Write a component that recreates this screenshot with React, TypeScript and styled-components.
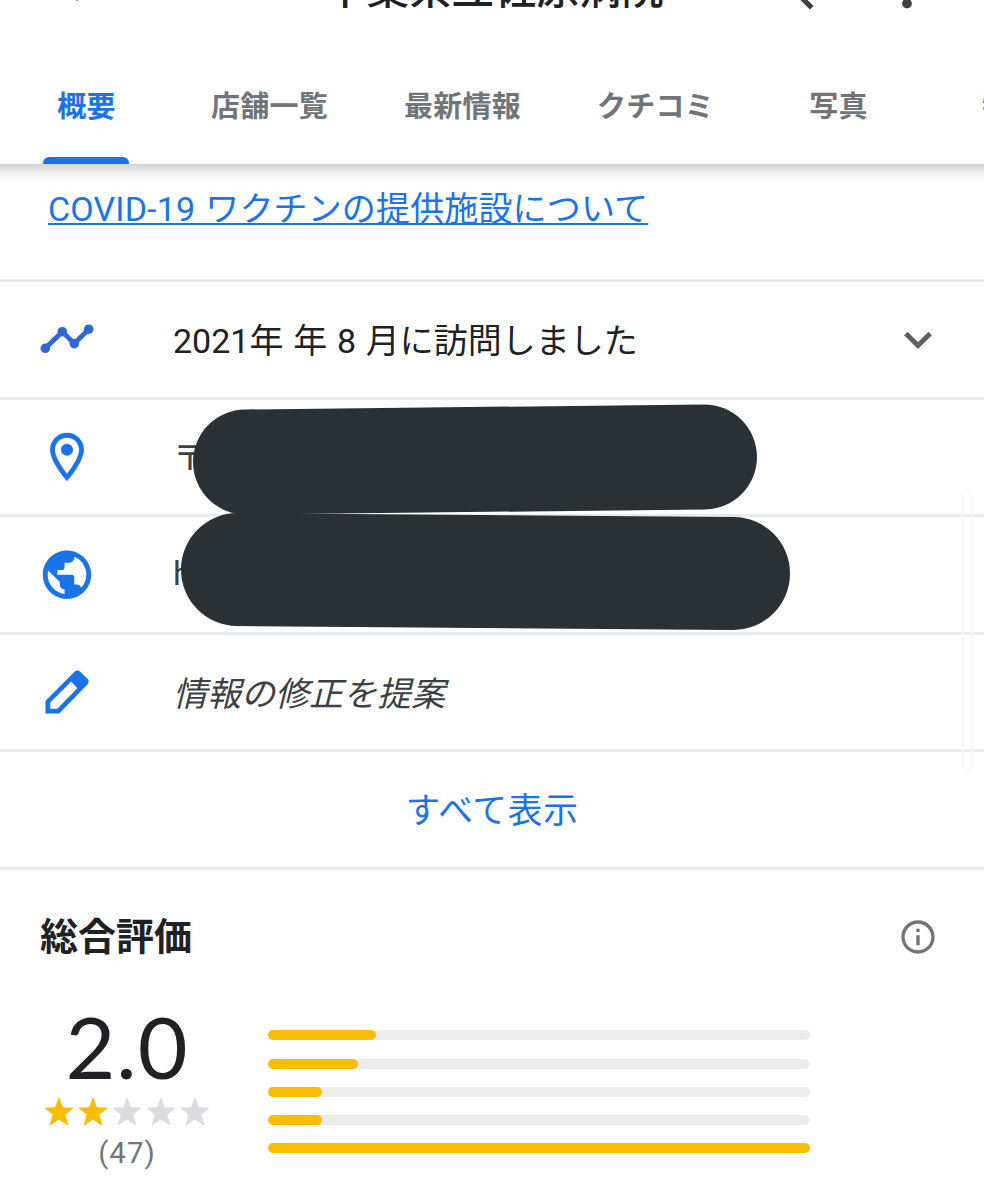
import { FC, ReactNode } from 'react';
import styled, { createGlobalStyle } from 'styled-components';
import { MdArrowBack, MdInfoOutline, MdMoreVert, MdSearch } from 'react-icons/md';

const colors = {
  blue: '#1a73e8',
  timeline: '#3367d6',
  text: '#202124',
  body: '#3c4043',
  grey: '#70757a',
  line: '#e8eaed',
  star: '#fbbc04',
  starEmpty: '#dadce0',
  track: '#ececec',
  marker: '#2b3034',
};

const TABS = ['概要', '店舗一覧', '最新情報', 'クチコミ', '写真', '特徴'];
const REVIEW_BARS = [20, 16.6, 10, 10, 100];
const RATING = 2;

const TimelineIcon: FC = () => (
  <svg width="54" height="30" viewBox="0 0 54 30" fill={colors.timeline}>
    <path
      d="M5.3 24.3L22.3 7.7L34.3 19.6L48.7 5.2"
      fill="none"
      stroke={colors.timeline}
      strokeWidth="4.8"
    />
    <circle cx="5.3" cy="24.3" r="4.8" />
    <circle cx="22.3" cy="7.7" r="4.8" />
    <circle cx="34.3" cy="19.6" r="4.8" />
    <circle cx="48.7" cy="5.2" r="4.8" />
  </svg>
);

const PlaceIcon: FC = () => (
  <svg width="58" height="58" viewBox="0 0 24 24" fill={colors.blue}>
    <path d="M12 2C8.13 2 5 5.13 5 9c0 5.25 7 13 7 13s7-7.75 7-13c0-3.87-3.13-7-7-7zM7 9c0-2.76 2.24-5 5-5s5 2.24 5 5c0 2.88-2.88 7.19-5 9.88C9.92 16.21 7 11.85 7 9z" />
    <circle cx="12" cy="9" r="2.5" />
  </svg>
);

const GlobeIcon: FC = () => (
  <svg width="58" height="58" viewBox="0 -0.3 24 24" fill={colors.blue}>
    <path d="M12 2C6.48 2 2 6.48 2 12s4.48 10 10 10 10-4.48 10-10S17.52 2 12 2zm-1 17.93c-3.95-.49-7-3.85-7-7.93 0-.62.08-1.21.21-1.79L9 15v1c0 1.1.9 2 2 2v1.93zm6.9-2.54c-.26-.81-1-1.39-1.9-1.39h-1v-3c0-.55-.45-1-1-1H8v-2h2c.55 0 1-.45 1-1V7h2c1.1 0 2-.9 2-2v-.41c2.93 1.19 5 4.06 5 7.41 0 2.08-.8 3.97-2.1 5.39z" />
  </svg>
);

const PencilIcon: FC = () => (
  <svg width="44" height="44" viewBox="0 0 44 44" fill={colors.blue} fillRule="evenodd">
    <path d="M.5 43.5V30.7L29.8 1.6Q32.4-.6 35 1.6L42.6 9Q44.8 11.6 42.6 14.2L14.3 43.5ZM5.3 38.8H12.3L32.4 18.2L26.2 11.6L5.3 32.4Z" />
  </svg>
);

const ChevronIcon: FC = () => (
  <svg width="30" height="20" viewBox="0 0 30 20" fill="none" stroke="#616161" strokeWidth="5">
    <path d="M2.8 4.5L15 16.5L27.2 4.5" />
  </svg>
);

const StarIcon: FC<{ color: string }> = ({ color }) => (
  <svg width="34" height="30" viewBox="0 0 34 30" fill={color} stroke={color} strokeLinejoin="round">
    <path d="M17 1L20.6 10.8L30.8 11.2L22.8 17.6L25.8 28L17 22L8.2 28L11.2 17.6L3.2 11.2L13.4 10.8Z" />
  </svg>
);

type InfoRowProps = {
  icon: ReactNode;
  children: ReactNode;
  end?: ReactNode;
};

const InfoRow: FC<InfoRowProps> = ({ icon, children, end }) => (
  <Row>
    <IconSlot>{icon}</IconSlot>
    {children}
    {end && <RowEnd>{end}</RowEnd>}
  </Row>
);

const App: FC = () => (
  <>
    <GlobalStyle />
    <Page>
      <Header>
        <Toolbar>
          <BackButton>
            <MdArrowBack size={36} />
          </BackButton>
          <Title>千葉県立佐原病院</Title>
          <Actions>
            <MdSearch size={58} />
            <MdMoreVert size={58} />
          </Actions>
        </Toolbar>
        <Tabs>
          {TABS.map((tab, i) => (
            <Tab key={tab} $active={i === 0} $wide={tab.length > 2}>
              {tab}
            </Tab>
          ))}
        </Tabs>
      </Header>

      <Notice>
        <NoticeLink>COVID-19 ワクチンの提供施設について</NoticeLink>
      </Notice>

      <InfoRow icon={<TimelineIcon />} end={<ChevronIcon />}>
        <RowText $dark>2021年 年 8 月に訪問しました</RowText>
      </InfoRow>
      <InfoRow icon={<PlaceIcon />}>
        <RowText>〒</RowText>
        <Marker $left={193} $top={7} $width={564} $height={105} $angle={-0.62} />
      </InfoRow>
      <InfoRow icon={<GlobeIcon />}>
        <RowText>h</RowText>
        <Marker $left={181} $top={-2} $width={609} $height={113} $angle={0.45} />
      </InfoRow>
      <InfoRow icon={<PencilIcon />}>
        <RowText $italic>情報の修正を提案</RowText>
      </InfoRow>
      <ShowAll>すべて表示</ShowAll>

      <Reviews>
        <ReviewsHeader>
          <Heading>総合評価</Heading>
          <MdInfoOutline size={40} color={colors.grey} />
        </ReviewsHeader>
        <Summary>
          <ScoreBox>
            <Score>2.0</Score>
            <Stars>
              {[1, 2, 3, 4, 5].map((n) => (
                <StarIcon key={n} color={n <= RATING ? colors.star : colors.starEmpty} />
              ))}
            </Stars>
            <Count>(47)</Count>
          </ScoreBox>
          <Bars>
            {REVIEW_BARS.map((value, i) => (
              <Track key={i}>
                <Fill style={{ width: `${value}%` }} />
              </Track>
            ))}
          </Bars>
        </Summary>
      </Reviews>
      <ScrollThumb />
    </Page>
  </>
);

const GlobalStyle = createGlobalStyle`
  * {
    box-sizing: border-box;
  }
  body {
    margin: 0;
    background: #fff;
    font-family: Roboto, 'Noto Sans CJK JP', sans-serif;
    overflow: hidden;
  }
  svg {
    display: block;
    flex-shrink: 0;
  }
`;

const Page = styled.div`
  position: relative;
  width: 984px;
  height: 1200px;
  overflow: hidden;
  background: #fff;
`;

const Header = styled.header`
  height: 164px;
  display: flex;
  flex-direction: column;
  background: #fff;

  &::after {
    content: '';
    flex-shrink: 0;
    height: 17px;
    background: linear-gradient(#d3d3d3, #ebebeb 45%, #fff);
  }
`;

/* scrolled mostly out of view */
const Toolbar = styled.div`
  flex-shrink: 0;
  height: 58px;
  margin-top: -40px;
  display: grid;
  grid-template-columns: 220px 1fr 220px;
  grid-template-rows: 58px;
  align-items: center;
  color: ${colors.body};
`;

const BackButton = styled.div`
  padding-left: 59px;
`;

const Title = styled.div`
  text-align: center;
  color: ${colors.text};
  font-size: 42.5px;
  font-weight: 500;
  line-height: 56px;
  padding: 2px 0 0 4px;
  white-space: nowrap;
`;

const Actions = styled.div`
  display: flex;
  gap: 56px;
`;

const Tabs = styled.nav`
  flex-shrink: 0;
  height: 146px;
  margin-left: -1px;
  display: flex;
`;

const Tab = styled.div<{ $active: boolean; $wide: boolean }>`
  flex: 0 0 ${(props) => (props.$wide ? 193 : 173)}px;
  display: flex;
  flex-direction: column;
  align-items: center;
  justify-content: space-between;
  padding-top: 67px;
  color: ${(props) => (props.$active ? colors.blue : colors.grey)};
  font-size: 29px;
  font-weight: 700;
  line-height: 44px;
  letter-spacing: 0.2px;
  text-indent: 2px;

  &::after {
    content: '';
    width: 86px;
    height: 7px;
    border-radius: 6px 6px 0 0;
    background: ${(props) => (props.$active ? colors.blue : 'transparent')};
  }
`;

const Notice = styled.div`
  height: 118px;
  padding: 21px 0 0 48px;
  border-bottom: 3px solid ${colors.line};
`;

const NoticeLink = styled.a`
  color: ${colors.blue};
  font-size: 34px;
  line-height: 48px;
  letter-spacing: 0.15px;
  word-spacing: 1.5px;
  text-decoration: underline;
  text-decoration-thickness: 2px;
  text-underline-offset: 2px;
  text-decoration-skip-ink: none;
`;

const Row = styled.div`
  position: relative;
  height: 117.6px;
  display: flex;
  align-items: center;
  border-bottom: 3px solid ${colors.line};
`;

const IconSlot = styled.div`
  width: 134px;
  margin-right: 39px;
  display: flex;
  justify-content: center;
`;

const RowText = styled.span<{ $dark?: boolean; $italic?: boolean }>`
  padding-bottom: 2px;
  color: ${(props) => (props.$dark ? colors.text : colors.body)};
  font-size: 34px;
  font-style: ${(props) => (props.$italic ? 'italic' : 'normal')};
  word-spacing: 1.3px;
  white-space: nowrap;
`;

const RowEnd = styled.div`
  margin-left: auto;
  padding-right: 51px;
`;

/* hand-drawn stroke that hides the address and the web site */
const Marker = styled.div<{
  $left: number;
  $top: number;
  $width: number;
  $height: number;
  $angle: number;
}>`
  position: absolute;
  z-index: 1;
  left: ${(props) => props.$left}px;
  top: ${(props) => props.$top}px;
  width: ${(props) => props.$width}px;
  height: ${(props) => props.$height}px;
  border-radius: 60px;
  background: ${colors.marker};
  transform: rotate(${(props) => props.$angle}deg);
`;

const ShowAll = styled.div`
  height: 117.6px;
  padding-bottom: 3px;
  display: flex;
  align-items: center;
  justify-content: center;
  border-bottom: 3px solid ${colors.line};
  color: ${colors.blue};
  font-size: 34.8px;
  letter-spacing: 0.6px;
`;

const Reviews = styled.section`
  padding: 37px 46px 0 40px;
`;

const ReviewsHeader = styled.div`
  height: 60px;
  display: flex;
  align-items: center;
  justify-content: space-between;
`;

const Heading = styled.h2`
  margin: 0;
  color: ${colors.text};
  font-size: 38px;
  font-weight: 700;
  line-height: 60px;
`;

const Summary = styled.div`
  display: flex;
  margin-top: 33px;
`;

const ScoreBox = styled.div`
  width: 174px;
  display: flex;
  flex-direction: column;
  align-items: center;
`;

const Score = styled.div`
  color: ${colors.text};
  font-family: Lato, sans-serif;
  font-size: 86px;
  line-height: 91px;
  letter-spacing: 1px;
`;

const Stars = styled.div`
  margin-top: 6px;
  display: flex;
`;

const Count = styled.div`
  margin-top: 7px;
  color: ${colors.grey};
  font-size: 29.5px;
  line-height: 38px;
  letter-spacing: 1px;
`;

const Bars = styled.div`
  width: 542px;
  margin: 30.5px 0 0 54px;
  display: flex;
  flex-direction: column;
  gap: 18.2px;
`;

const Track = styled.div`
  height: 10px;
  border-radius: 5px;
  background: ${colors.track};
`;

const Fill = styled.div`
  height: 100%;
  border-radius: 5px;
  background: ${colors.star};
`;

const ScrollThumb = styled.div`
  position: absolute;
  top: 489px;
  right: 11px;
  width: 12px;
  height: 285px;
  border: 3px double #f8f8f8;
  border-radius: 6px;
`;

export default App;
